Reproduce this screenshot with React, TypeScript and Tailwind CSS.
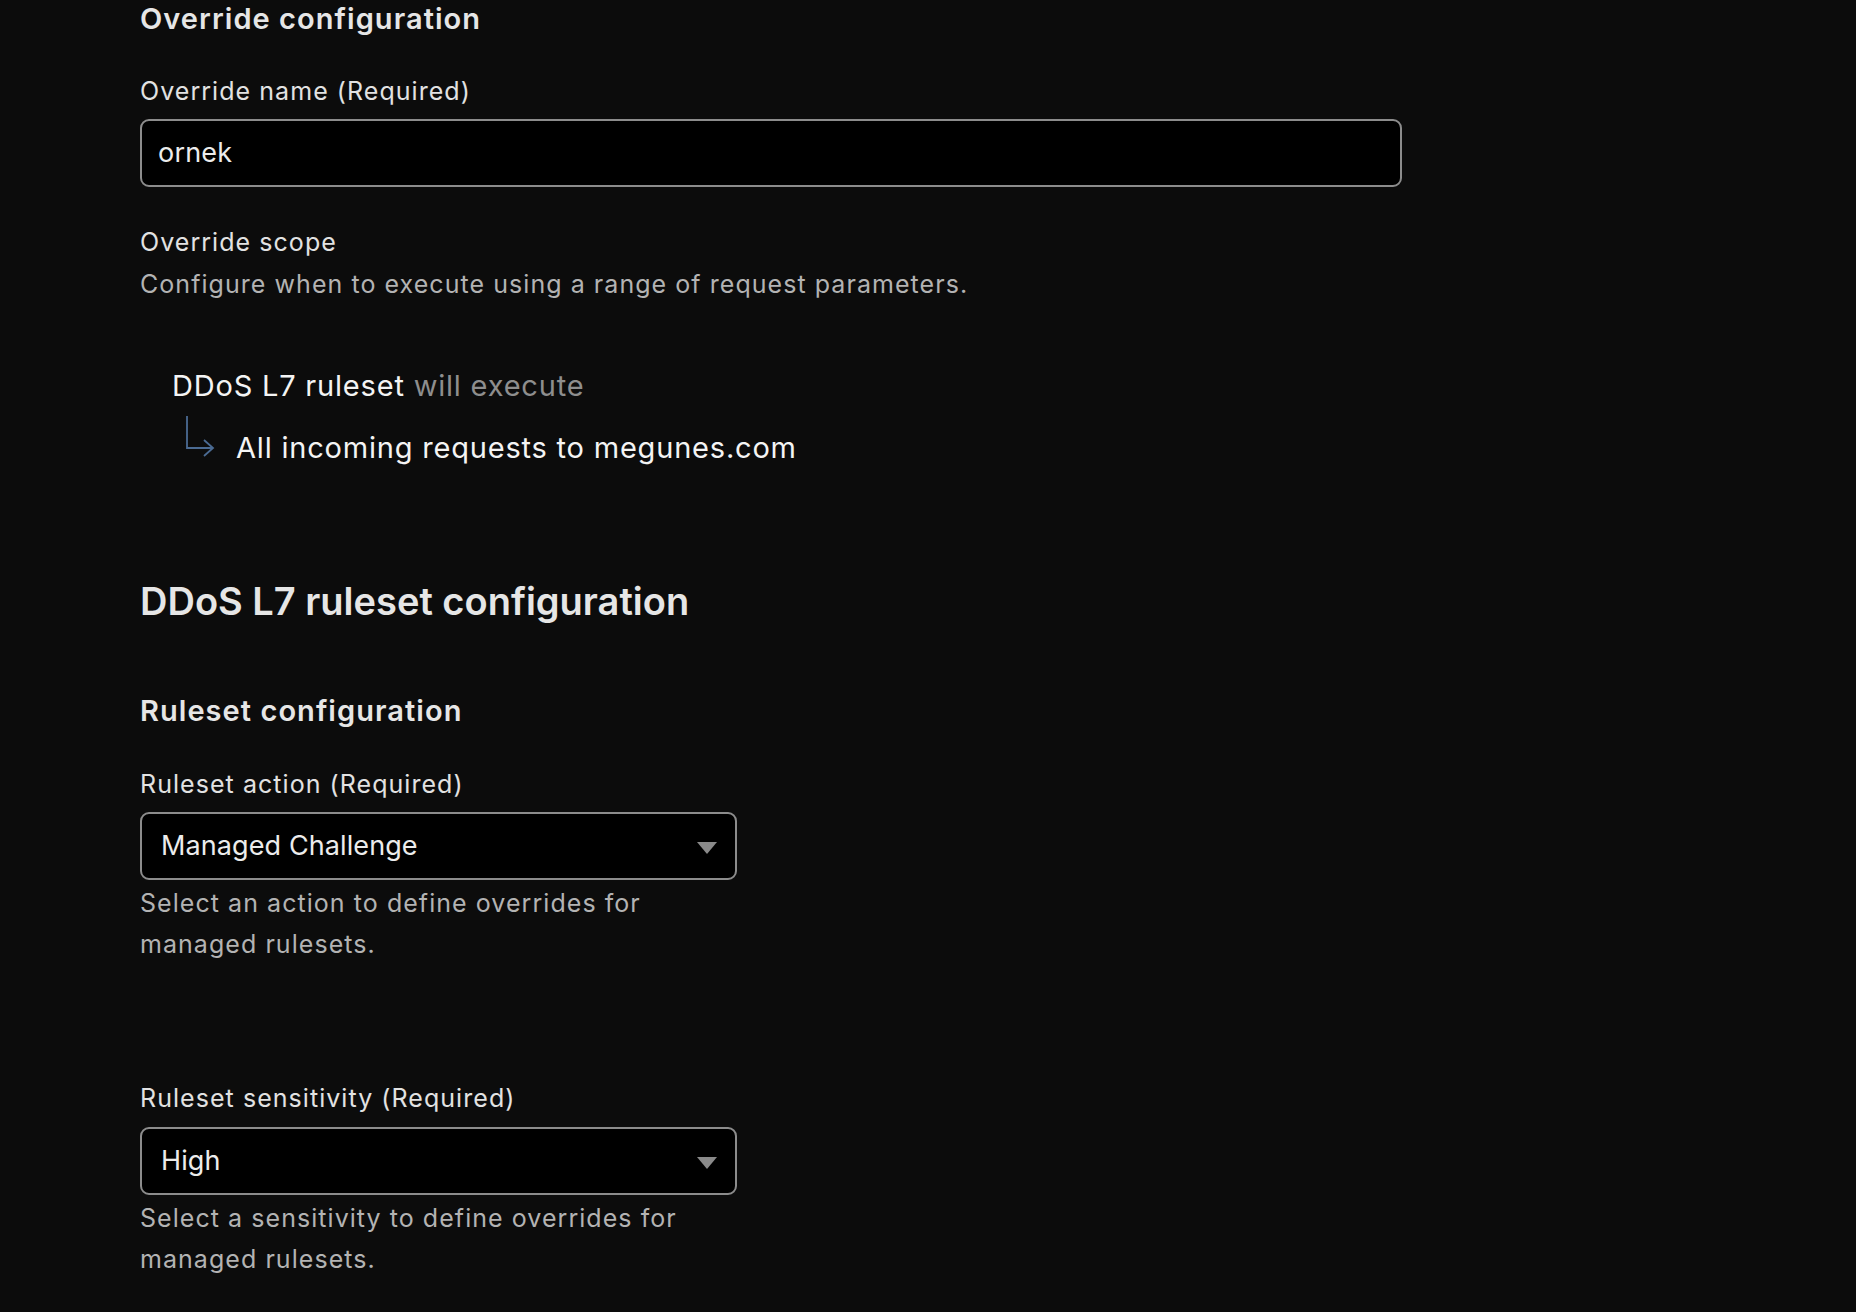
const font = { fontFamily: "Inter, 'Noto Sans', sans-serif" };

const Label = ({ children, className = "" }: { children: React.ReactNode; className?: string }) => (
  <div className={`text-[25px] leading-[30px] tracking-[1.05px] text-[#e2e2e2] ${className}`}>{children}</div>
);

const Help = ({ children, className = "" }: { children: React.ReactNode; className?: string }) => (
  <p className={`text-[25px] leading-[41px] tracking-[1.05px] text-[#b3b3b3] ${className}`}>{children}</p>
);

const Select = ({ value, className = "" }: { value: string; className?: string }) => (
  <div
    className={`flex h-[68px] w-[597px] items-center justify-between rounded-[9px] border-2 border-[#8c8c8c] bg-black pl-[19px] pr-[18px] ${className}`}
  >
    <span className="text-[27px] tracking-[0.1px] text-[#ececec]">{value}</span>
    <svg width="20" height="12" viewBox="0 0 20 12" className="mt-[3px]">
      <polygon points="0,0 20,0 10,12" fill="#8a8a8a" />
    </svg>
  </div>
);

const App = () => {
  return (
    <div className="min-h-screen bg-[#0c0c0c] pl-[140px] pb-10" style={font}>
      <div className="flex flex-col">
        <h2 className="mt-[2px] text-[29px] leading-[34px] font-semibold tracking-[1.05px] text-[#e6e6e6]">
          Override configuration
        </h2>
        <Label className="mt-[40px]">Override name (Required)</Label>
        <div className="mt-[13px] flex h-[68px] w-[1262px] items-center rounded-[9px] border-2 border-[#8c8c8c] bg-black pl-[16px]">
          <span className="text-[27px] tracking-[0.2px] text-[#ececec]">ornek</span>
        </div>

        <div className="mt-[34px] text-[25px] leading-[42px] tracking-[1.05px] text-[#e2e2e2]">Override scope</div>
        <Help className="leading-[42px]">Configure when to execute using a range of request parameters.</Help>

        <div className="mt-[63px] pl-[32px] text-[29px] leading-[36px] tracking-[0.8px] text-[#f4f4f4]">
          DDoS L7 ruleset <span className="text-[#8e8e8e]">will execute</span>
        </div>
        <div className="mt-[10px] flex items-start pl-[44px]">
          <svg width="32" height="44" viewBox="0 0 32 44" fill="none" stroke="#4b6b93" strokeWidth="1.8">
            <path d="M3 2 V34 H29" />
            <path d="M20 26 L29 34 L20 42" />
          </svg>
          <span className="mt-[16px] ml-[20px] text-[29px] leading-[36px] tracking-[0.8px] text-[#f4f4f4]">
            All incoming requests to megunes.com
          </span>
        </div>

        <h1 className="mt-[112px] text-[38px] leading-[46px] font-semibold text-[#e6e6e6]">
          DDoS L7 ruleset configuration
        </h1>

        <h2 className="mt-[70px] text-[29px] leading-[34px] font-semibold tracking-[1.05px] text-[#e6e6e6]">
          Ruleset configuration
        </h2>

        <Label className="mt-[41px]">Ruleset action (Required)</Label>
        <Select value="Managed Challenge" className="mt-[13px]" />
        <Help className="mt-[3px] w-[597px]">Select an action to define overrides for managed rulesets.</Help>

        <Label className="mt-[118px]">Ruleset sensitivity (Required)</Label>
        <Select value="High" className="mt-[14px]" />
        <Help className="mt-[3px] w-[597px]">Select a sensitivity to define overrides for managed rulesets.</Help>
      </div>
    </div>
  );
};

export default App;
